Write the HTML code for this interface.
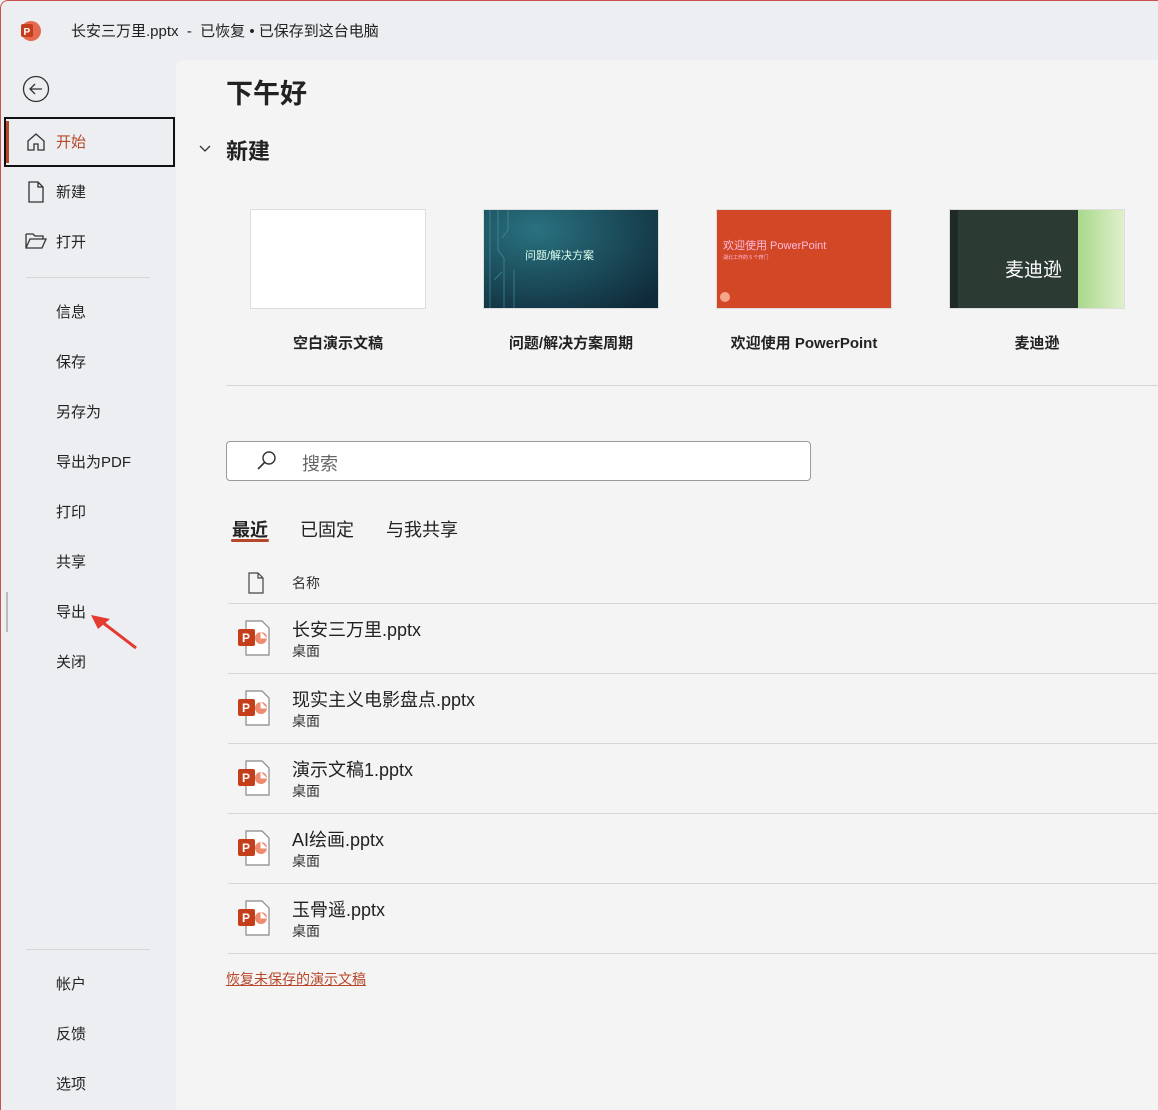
<!DOCTYPE html>
<html><head><meta charset="utf-8"><style>
*{margin:0;padding:0;box-sizing:border-box}
body{width:1158px;height:1110px;overflow:hidden;background:#eceef2;font-family:"Liberation Sans","Noto Sans CJK SC",sans-serif;color:#222;position:relative}
.frame{position:absolute;left:0;top:0;width:1158px;height:1110px;border-left:1px solid #c9534a;border-top:1px solid #c9534a;border-top-left-radius:8px;pointer-events:none}
.t{position:absolute;white-space:nowrap}
.main{position:absolute;left:176px;top:60px;right:0;bottom:0;background:#f4f4f4;border-top-left-radius:8px}
.nav{position:absolute;left:56px;font-size:15px;color:#222}
.hr{position:absolute;height:1px;background:#d6d6d6}
.thumb{position:absolute;top:209px;width:176px;height:100px;border:1px solid #ddd}
.cap{position:absolute;top:332px;width:176px;text-align:center;font-size:15px;font-weight:bold}
.row .n{font-size:18px}
</style></head><body>
<div class="frame"></div>
<!-- title bar -->
<svg style="position:absolute;left:19px;top:20px" width="24" height="22" viewBox="0 0 24 22"><circle cx="12" cy="11" r="10" fill="#e56a4f"/><rect x="2" y="4" width="12" height="13" rx="2" fill="#c43e1c"/><text x="4.5" y="15" font-size="10" font-weight="bold" fill="#fff" font-family="Liberation Sans">P</text></svg>
<div class="t" style="left:71px;top:20px;font-size:15px;color:#222">长安三万里.pptx &nbsp;- &nbsp;已恢复 • 已保存到这台电脑</div>

<!-- sidebar -->
<svg style="position:absolute;left:22px;top:75px" width="28" height="28" viewBox="0 0 28 28"><circle cx="14" cy="14" r="12.5" fill="none" stroke="#333" stroke-width="1.3"/><path d="M20 14H8M13 9l-5 5 5 5" fill="none" stroke="#333" stroke-width="1.3"/></svg>
<div style="position:absolute;left:4px;top:117px;width:171px;height:50px;border:2px solid #111"></div>
<div style="position:absolute;left:6px;top:121px;width:3px;height:42px;background:#b7472a"></div>
<svg style="position:absolute;left:25px;top:131px" width="22" height="22" viewBox="0 0 22 22"><path d="M3 10L11 3l8 7v9h-6v-6H9v6H3z" fill="none" stroke="#333" stroke-width="1.3"/></svg>
<div class="nav" style="top:131px;color:#b7472a">开始</div>
<svg style="position:absolute;left:27px;top:181px" width="18" height="22" viewBox="0 0 18 22"><path d="M2 1h9l5 5v15H2z M11 1v5h5" fill="none" stroke="#333" stroke-width="1.3"/></svg>
<div class="nav" style="top:181px">新建</div>
<svg style="position:absolute;left:25px;top:232px" width="22" height="18" viewBox="0 0 22 18"><path d="M1 2h7l2 2h8v3M1 2v14h16l4-9H5L1 16" fill="none" stroke="#333" stroke-width="1.3"/></svg>
<div class="nav" style="top:231px">打开</div>
<div class="hr" style="left:26px;top:277px;width:124px"></div>
<div class="nav" style="top:301px">信息</div>
<div class="nav" style="top:351px">保存</div>
<div class="nav" style="top:401px">另存为</div>
<div class="nav" style="top:451px">导出为PDF</div>
<div class="nav" style="top:501px">打印</div>
<div class="nav" style="top:551px">共享</div>
<div style="position:absolute;left:6px;top:592px;width:2px;height:40px;background:#bbb"></div>
<div class="nav" style="top:601px">导出</div>
<svg style="position:absolute;left:88px;top:612px" width="52" height="40" viewBox="0 0 52 40"><path d="M48 36L14 10" stroke="#e53a2f" stroke-width="3"/><path d="M3 3l19 4-12 10z" fill="#e53a2f"/></svg>
<div class="nav" style="top:651px">关闭</div>
<div class="hr" style="left:26px;top:949px;width:124px"></div>
<div class="nav" style="top:973px">帐户</div>
<div class="nav" style="top:1023px">反馈</div>
<div class="nav" style="top:1073px">选项</div>

<div class="main"></div>
<div class="t" style="left:226px;top:72px;font-size:27px;font-weight:bold">下午好</div>
<svg style="position:absolute;left:198px;top:143px" width="14" height="12" viewBox="0 0 14 12"><path d="M2 3l5 5 5-5" fill="none" stroke="#333" stroke-width="1.3"/></svg>
<div class="t" style="left:226px;top:134px;font-size:22px;font-weight:bold">新建</div>

<div class="thumb" style="left:250px;background:#fff"></div>
<div class="thumb" style="left:483px;background:radial-gradient(ellipse at 30% 20%,#2a7280,#0f2b3a 90%)"><svg width="40" height="98" style="position:absolute;left:0;top:0"><path d="M6 0v98M14 0v40l6 8v50M24 0v20l-6 8M30 60v38M10 70l8-8" stroke="#4b9aa5" stroke-width="1" fill="none" opacity=".6"/></svg><div class="t" style="left:41px;top:37px;font-size:11px;color:#dfe">问题/解决方案</div></div>
<div class="thumb" style="left:716px;background:#d24726"><div class="t" style="left:6px;top:27px;font-size:11px;color:#fbd">欢迎使用 PowerPoint</div><div class="t" style="left:6px;top:44px;font-size:5px;color:#fbd">湖北工作的 5 个窍门</div><div style="position:absolute;left:3px;top:82px;width:10px;height:10px;border-radius:50%;background:#f5a58c"></div></div>
<div class="thumb" style="left:949px;background:linear-gradient(90deg,#1f2a26 0 8px,#2c3a34 8px 128px,#a9d88b 128px,#dff0cc)"><div class="t" style="left:55px;top:45px;font-size:19px;color:#fff">麦迪逊</div></div>
<div class="cap" style="left:250px">空白演示文稿</div>
<div class="cap" style="left:483px">问题/解决方案周期</div>
<div class="cap" style="left:716px">欢迎使用 PowerPoint</div>
<div class="cap" style="left:949px">麦迪逊</div>
<div class="hr" style="left:226px;top:385px;width:932px"></div>

<div style="position:absolute;left:226px;top:441px;width:585px;height:40px;border:1px solid #9a9a9a;border-radius:4px;background:#fff"></div>
<svg style="position:absolute;left:256px;top:450px" width="22" height="22" viewBox="0 0 22 22"><circle cx="13" cy="8" r="6" fill="none" stroke="#333" stroke-width="1.4"/><path d="M9 12L2 19" stroke="#333" stroke-width="1.6"/></svg>
<div class="t" style="left:302px;top:450px;font-size:18px;color:#666">搜索</div>

<div class="t" style="left:232px;top:516px;font-size:18px;font-weight:bold">最近</div>
<div style="position:absolute;left:231px;top:539px;width:38px;height:3px;background:#b7472a;border-radius:2px"></div>
<div class="t" style="left:300px;top:516px;font-size:18px">已固定</div>
<div class="t" style="left:386px;top:516px;font-size:18px">与我共享</div>

<svg style="position:absolute;left:247px;top:572px" width="18" height="22" viewBox="0 0 18 22"><path d="M2 1h9l5 5v15H2z M11 1v5h5" fill="none" stroke="#444" stroke-width="1.2"/></svg>
<div class="t" style="left:292px;top:573px;font-size:14px;color:#333">名称</div>
<div class="hr" style="left:228px;top:603px;width:930px"></div>

<div id="rows"></div>
<script></script>
<!-- rows -->
<div class="row">
<svg style="position:absolute;left:237px;top:620px" width="34" height="36" viewBox="0 0 34 36"><path d="M9 1h16l7 7v27H9z" fill="#fff" stroke="#888" stroke-width="1.2"/><circle cx="24" cy="18" r="6" fill="#ee8a6f"/><path d="M24 12v6h6" fill="#fff" stroke="#fff"/><rect x="1" y="9" width="17" height="17" rx="2" fill="#c43e1c"/><text x="5" y="22" font-size="12" font-weight="bold" fill="#fff" font-family="Liberation Sans">P</text></svg>
<div class="t n" style="left:292px;top:616px">长安三万里.pptx</div><div class="t" style="left:292px;top:641px;font-size:14px;color:#333">桌面</div></div>
<div class="hr" style="left:228px;top:673px;width:930px"></div>
<div class="row">
<svg style="position:absolute;left:237px;top:690px" width="34" height="36" viewBox="0 0 34 36"><path d="M9 1h16l7 7v27H9z" fill="#fff" stroke="#888" stroke-width="1.2"/><circle cx="24" cy="18" r="6" fill="#ee8a6f"/><path d="M24 12v6h6" fill="#fff" stroke="#fff"/><rect x="1" y="9" width="17" height="17" rx="2" fill="#c43e1c"/><text x="5" y="22" font-size="12" font-weight="bold" fill="#fff" font-family="Liberation Sans">P</text></svg>
<div class="t n" style="left:292px;top:686px">现实主义电影盘点.pptx</div><div class="t" style="left:292px;top:711px;font-size:14px;color:#333">桌面</div></div>
<div class="hr" style="left:228px;top:743px;width:930px"></div>
<div class="row">
<svg style="position:absolute;left:237px;top:760px" width="34" height="36" viewBox="0 0 34 36"><path d="M9 1h16l7 7v27H9z" fill="#fff" stroke="#888" stroke-width="1.2"/><circle cx="24" cy="18" r="6" fill="#ee8a6f"/><path d="M24 12v6h6" fill="#fff" stroke="#fff"/><rect x="1" y="9" width="17" height="17" rx="2" fill="#c43e1c"/><text x="5" y="22" font-size="12" font-weight="bold" fill="#fff" font-family="Liberation Sans">P</text></svg>
<div class="t n" style="left:292px;top:756px">演示文稿1.pptx</div><div class="t" style="left:292px;top:781px;font-size:14px;color:#333">桌面</div></div>
<div class="hr" style="left:228px;top:813px;width:930px"></div>
<div class="row">
<svg style="position:absolute;left:237px;top:830px" width="34" height="36" viewBox="0 0 34 36"><path d="M9 1h16l7 7v27H9z" fill="#fff" stroke="#888" stroke-width="1.2"/><circle cx="24" cy="18" r="6" fill="#ee8a6f"/><path d="M24 12v6h6" fill="#fff" stroke="#fff"/><rect x="1" y="9" width="17" height="17" rx="2" fill="#c43e1c"/><text x="5" y="22" font-size="12" font-weight="bold" fill="#fff" font-family="Liberation Sans">P</text></svg>
<div class="t n" style="left:292px;top:826px">AI绘画.pptx</div><div class="t" style="left:292px;top:851px;font-size:14px;color:#333">桌面</div></div>
<div class="hr" style="left:228px;top:883px;width:930px"></div>
<div class="row">
<svg style="position:absolute;left:237px;top:900px" width="34" height="36" viewBox="0 0 34 36"><path d="M9 1h16l7 7v27H9z" fill="#fff" stroke="#888" stroke-width="1.2"/><circle cx="24" cy="18" r="6" fill="#ee8a6f"/><path d="M24 12v6h6" fill="#fff" stroke="#fff"/><rect x="1" y="9" width="17" height="17" rx="2" fill="#c43e1c"/><text x="5" y="22" font-size="12" font-weight="bold" fill="#fff" font-family="Liberation Sans">P</text></svg>
<div class="t n" style="left:292px;top:896px">玉骨遥.pptx</div><div class="t" style="left:292px;top:921px;font-size:14px;color:#333">桌面</div></div>
<div class="hr" style="left:228px;top:953px;width:930px"></div>
<div class="t" style="left:226px;top:969px;font-size:14px;color:#b7472a;text-decoration:underline">恢复未保存的演示文稿</div>
</body></html>
